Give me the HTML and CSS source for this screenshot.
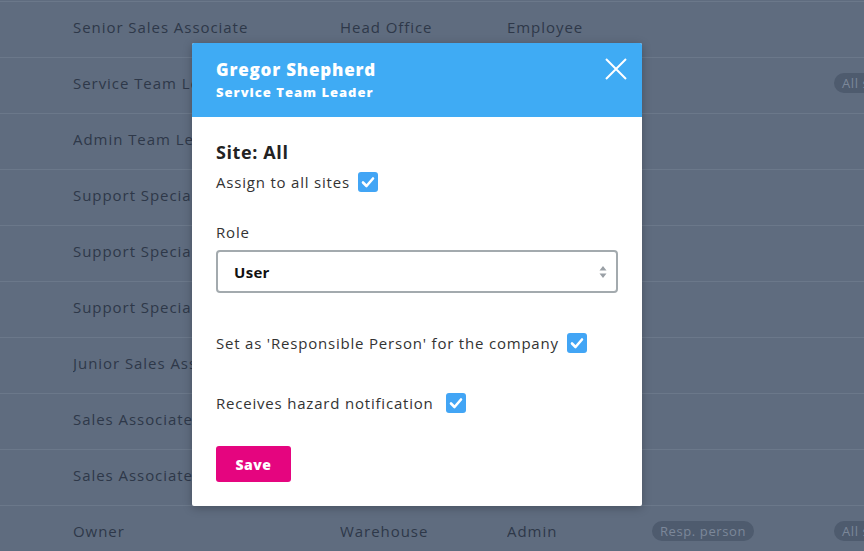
FILE: index.html
```html
<!DOCTYPE html>
<html>
<head>
<meta charset="utf-8">
<link rel="stylesheet" href="styles.css">
</head>
<body>
<div class="table">
  <div class="row"><span class="c1">Senior Sales Associate</span><span class="c2">Head Office</span><span class="c3">Employee</span><span class="c4"></span><span class="c5"></span></div>
  <div class="row"><span class="c1">Service Team Leader</span><span class="c2"></span><span class="c3"></span><span class="c4"></span><span class="c5"><span class="pill">All sites</span></span></div>
  <div class="row"><span class="c1">Admin Team Leader</span><span class="c2"></span><span class="c3"></span><span class="c4"></span><span class="c5"></span></div>
  <div class="row"><span class="c1">Support Specialist</span><span class="c2"></span><span class="c3"></span><span class="c4"></span><span class="c5"></span></div>
  <div class="row"><span class="c1">Support Specialist</span><span class="c2"></span><span class="c3"></span><span class="c4"></span><span class="c5"></span></div>
  <div class="row"><span class="c1">Support Specialist</span><span class="c2"></span><span class="c3"></span><span class="c4"></span><span class="c5"></span></div>
  <div class="row"><span class="c1">Junior Sales Associate</span><span class="c2"></span><span class="c3"></span><span class="c4"></span><span class="c5"></span></div>
  <div class="row"><span class="c1">Sales Associate</span><span class="c2"></span><span class="c3"></span><span class="c4"></span><span class="c5"></span></div>
  <div class="row"><span class="c1">Sales Associate</span><span class="c2"></span><span class="c3"></span><span class="c4"></span><span class="c5"></span></div>
  <div class="row"><span class="c1">Owner</span><span class="c2">Warehouse</span><span class="c3">Admin</span><span class="c4"><span class="pill">Resp. person</span></span><span class="c5"><span class="pill">All sites</span></span></div>
</div>

<div class="modal">
  <div class="modal-head">
    <div class="titles">
      <div class="name">Gregor Shepherd</div>
      <div class="subtitle">Service Team Leader</div>
    </div>
    <svg class="close" width="24" height="24" viewBox="0 0 24 24"><path d="M2 2 L22 22 M22 2 L2 22" stroke="#fff" stroke-width="2" fill="none"/></svg>
  </div>
  <div class="modal-body">
    <div class="site">Site: All</div>
    <div class="check-line">Assign to all sites <span class="cb"><svg width="20" height="20" viewBox="0 0 20 20"><path d="M5 10.5 L8.5 14 L15 6.5" stroke="#fff" stroke-width="2.6" fill="none" stroke-linecap="round" stroke-linejoin="round"/></svg></span></div>
    <div class="label">Role</div>
    <div class="select">
      <span>User</span>
      <svg class="arrows" width="8" height="14" viewBox="0 0 8 14"><path d="M4 1 L7.5 5.5 H0.5 Z M4 13 L7.5 8.5 H0.5 Z" fill="#9aa0a6"/></svg>
    </div>
    <div class="check-line resp">Set as 'Responsible Person' for the company <span class="cb"><svg width="20" height="20" viewBox="0 0 20 20"><path d="M5 10.5 L8.5 14 L15 6.5" stroke="#fff" stroke-width="2.6" fill="none" stroke-linecap="round" stroke-linejoin="round"/></svg></span></div>
    <div class="check-line hazard">Receives hazard notification <span class="cb"><svg width="20" height="20" viewBox="0 0 20 20"><path d="M5 10.5 L8.5 14 L15 6.5" stroke="#fff" stroke-width="2.6" fill="none" stroke-linecap="round" stroke-linejoin="round"/></svg></span></div>
    <button class="save">Save</button>
  </div>
</div>
</body>
</html>
```

FILE: styles.css
```css
html, body {
  margin: 0;
  padding: 0;
  width: 864px;
  height: 551px;
  overflow: hidden;
  background: #5f6c7f;
  font-family: "Open Sans", "Noto Sans", sans-serif;
}

.table {
  border-top: 1px solid #6b788a;
  margin-top: 1px;
}

.row {
  display: grid;
  grid-template-columns: 73px 267px 167px 145px 182px 30px;
  height: 49px;
  padding-bottom: 6px;
  border-bottom: 1px solid #6b788a;
  align-items: center;
  color: #2e3849;
  font-size: 15px;
  letter-spacing: 0.95px;
  white-space: nowrap;
}

.row > span {
  overflow: hidden;
}

.row::before {
  content: "";
}

.pill {
  display: inline-block;
  background: #4e5b6e;
  color: #7c889a;
  font-size: 13px;
  letter-spacing: 0.6px;
  border-radius: 11px;
  padding: 1px 8px;
  line-height: 18px;
}

.modal {
  position: absolute;
  left: 192px;
  top: 43px;
  width: 450px;
  background: #fff;
  border-radius: 2px;
  box-shadow: 0 2px 10px rgba(0,0,0,0.25);
  overflow: hidden;
}

.modal-head {
  background: #3fabf4;
  height: 74px;
  display: flex;
  justify-content: space-between;
  align-items: flex-start;
  padding: 0 14px 0 24px;
  color: #fff;
}

.titles {
  padding-top: 16px;
}

.name {
  font-weight: 800;
  font-size: 17px;
  line-height: 22px;
  letter-spacing: 0.8px;
}

.subtitle {
  font-weight: 800;
  font-size: 13px;
  line-height: 18px;
  margin-top: 2px;
  letter-spacing: 1px;
}

.close {
  margin-top: 14px;
}

.modal-body {
  padding: 24px 24px 24px 24px;
  color: #333;
  font-size: 15px;
  letter-spacing: 0.8px;
}

.site {
  font-weight: 700;
  font-size: 18px;
  line-height: 22px;
  color: #222;
  letter-spacing: 0.6px;
}

.check-line {
  display: flex;
  align-items: center;
  gap: 8px;
  height: 22px;
  margin-top: 8px;
  color: #333;
}

.cb {
  width: 20px;
  height: 20px;
  background: #42a5f5;
  border-radius: 3px;
  display: inline-flex;
}

.label {
  margin-top: 28px;
  line-height: 22px;
}

.select {
  margin-top: 7px;
  height: 39px;
  border: 2px solid #a3aaae;
  border-radius: 4px;
  display: flex;
  align-items: center;
  justify-content: space-between;
  padding: 0 9px 0 16px;
  font-weight: 700;
  letter-spacing: 0.3px;
  color: #111;
}

.check-line.resp {
  margin-top: 39px;
}

.check-line.hazard {
  margin-top: 38px;
}

.hazard .cb {
  margin-left: 4px;
}

.save {
  margin-top: 32px;
  background: #e5057f;
  color: #fff;
  border: none;
  border-radius: 3px;
  width: 75px;
  height: 36px;
  font-family: "Open Sans", sans-serif;
  font-weight: 800;
  font-size: 14px;
  letter-spacing: 0.5px;
  padding: 0;
}
```
